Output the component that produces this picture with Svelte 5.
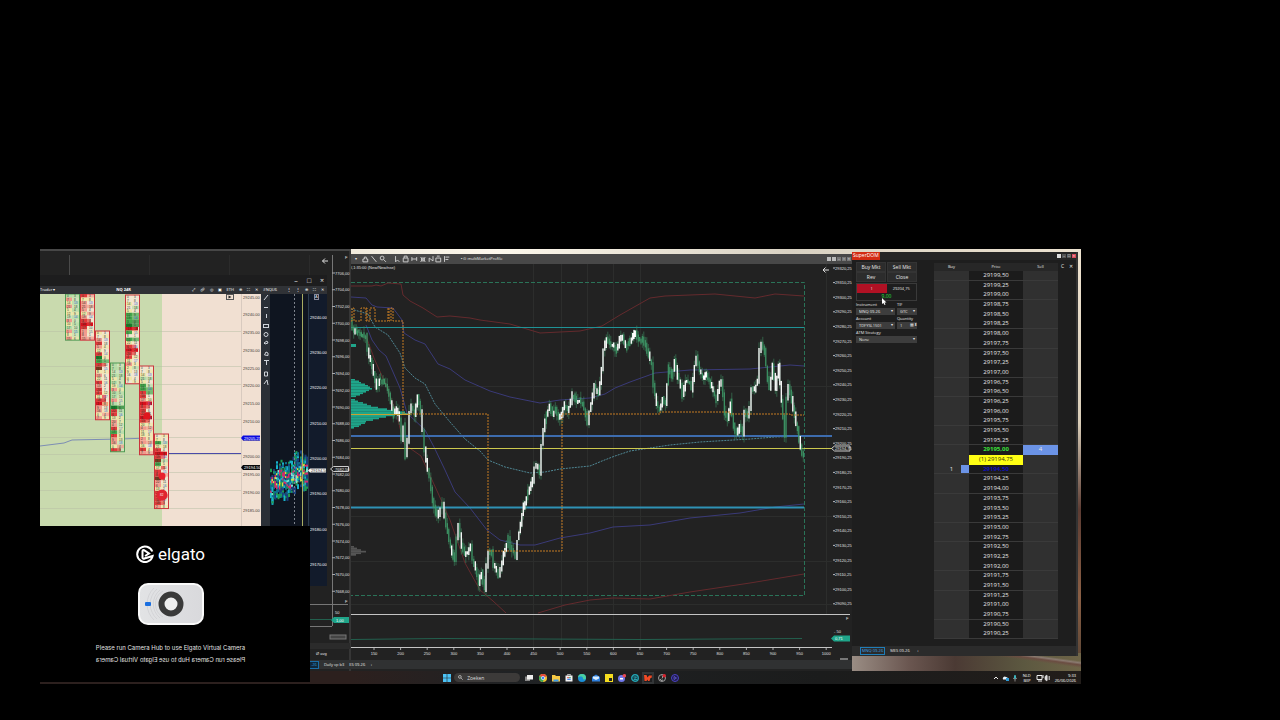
<script lang="ts">
    type Point = [number, number];

    // Small seeded generator so the candles and the heatmap look the same on every load
    function seeded(seed: number) {
        let s = seed;
        return () => {
            s = (s * 16807) % 2147483647;
            return s / 2147483647;
        };
    }

    function price(n: number, sep = ',') {
        return n.toFixed(2).replace('.', sep);
    }

    function steps(count: number, y: number, gap: number, value: number, dec: number, sep = ',') {
        return Array.from({ length: count }, (_, i) => ({ y: y + i * gap, text: price(value - i * dec, sep) }));
    }

    const track: Point[] = [
        [351, 318], [353, 330], [357, 331], [362, 334], [366, 336], [368, 350], [371, 360], [374, 374], [377, 387],
        [380, 379], [385, 383], [388, 390], [391, 402], [394, 415], [397, 408], [400, 418], [402, 440], [404, 426],
        [406, 456], [408, 440], [410, 412], [412, 406], [415, 415], [418, 395], [421, 412], [423, 430], [425, 450],
        [428, 468], [430, 478], [433, 500], [436, 512], [439, 515], [441, 508], [443, 505], [445, 515], [448, 532],
        [451, 548], [455, 560], [457, 540], [459, 526], [462, 545], [465, 555], [468, 553], [471, 545], [473, 560],
        [476, 570], [479, 582], [482, 573], [485, 590], [487, 565], [489, 551], [492, 552], [494, 565], [497, 572],
        [499, 577], [501, 570], [504, 553], [507, 545], [509, 538], [511, 548], [514, 553], [516, 556], [518, 540],
        [521, 525], [524, 506], [527, 498], [530, 488], [533, 480], [535, 468], [537, 465], [540, 472], [542, 445],
        [544, 430], [547, 415], [550, 405], [553, 415], [556, 410], [559, 416], [562, 415], [565, 405], [568, 410],
        [571, 402], [573, 395], [577, 402], [580, 400], [583, 405], [586, 414], [588, 425], [590, 412], [593, 395],
        [595, 385], [599, 395], [602, 370], [604, 350], [607, 338], [610, 344], [613, 345], [617, 350], [620, 340],
        [623, 335], [626, 347], [629, 343], [632, 338], [636, 332], [639, 340], [643, 340], [646, 345], [649, 355],
        [652, 365], [654, 385], [657, 405], [660, 409], [663, 398], [666, 403], [669, 368], [672, 377], [675, 362],
        [678, 376], [681, 385], [683, 395], [686, 382], [690, 383], [692, 390], [695, 366], [697, 356], [700, 370],
        [703, 378], [707, 375], [711, 385], [715, 395], [717, 400], [720, 384], [722, 380], [725, 412], [728, 420],
        [731, 402], [734, 425], [737, 435], [740, 425], [743, 433], [745, 410], [748, 417], [750, 410], [752, 388],
        [755, 390], [758, 380], [760, 352], [762, 343], [765, 352], [768, 380], [770, 390], [773, 366], [776, 388],
        [779, 364], [782, 400], [785, 434], [787, 400], [789, 385], [792, 400], [795, 415], [798, 430], [801, 448],
        [804, 457]
    ];

    function candlePaths(points: Point[]) {
        const rnd = seeded(77);
        let up = '';
        let down = '';
        let wicks = '';
        for (let i = 1; i < points.length; i++) {
            const [x0, y0] = points[i - 1];
            const [x1, y1] = points[i];
            const n = Math.max(1, Math.round((x1 - x0) / 1.4));
            for (let k = 0; k < n; k++) {
                const x = x0 + ((x1 - x0) * (k + 0.5)) / n;
                const a = y0 + ((y1 - y0) * k) / n;
                const b = y0 + ((y1 - y0) * (k + 1)) / n;
                const top = Math.min(a, b) - rnd() * 4;
                const low = Math.max(a, b) + rnd() * 4;
                const rising = b < a ? rnd() > 0.1 : rnd() > 0.75;
                const bar = `M${x.toFixed(1)} ${top.toFixed(1)}V${low.toFixed(1)}`;
                if (rising) up += bar;
                else down += bar;
                wicks += `M${x.toFixed(1)} ${(top - rnd() * 6).toFixed(1)}V${(low + rnd() * 6).toFixed(1)}`;
            }
        }
        return { up, down, wicks };
    }

    const candles = candlePaths(track);

    const bands = [
        { kind: 'outer', d: 'M351 286L372 286 376 285 381 286 388 283 401 284 403 295 410 301 423 308 437 317 450 316 470 318 480 320 510 324 540 333 580 331 602 326 620 315 650 298 665 296 690 295 715 294 735 296 755 298 775 294 804 296' },
        { kind: 'inner', d: 'M351 297L366 298 372 305 377 307 393 308 402 320 404 333 415 340 425 344 438 364 450 369 465 380 490 391 510 397 540 403 560 400 590 398 605 394 615 388 630 382 655 373 690 370 750 369 790 365 804 366' },
        { kind: 'inner', d: 'M366 325L372 340 379 350 386 356 400 388 407 413 425 430 434 447 445 470 455 492 470 508 487 530 500 540 520 545 535 545 560 538 590 533 613 527 650 525 690 518 740 513 775 507 804 504' },
        { kind: 'outer', d: 'M366 336L374 358 386 385 396 412 404 444 421 456 438 493 450 520 465 563 480 590 493 601 506 613M538 613L565 605 590 600 613 598 650 599 690 592 750 583 804 574' }
    ];

    const vwap = 'M351 309L368 314 375 327 388 335 400 353 405 368 415 378 425 384 435 404 450 422 465 439 480 451 488 460 505 467 530 473 545 472 560 469 590 466 602 461 615 456 630 451 670 445 700 442 750 439 775 437 804 436';
    const levels = 'M351 321H352V308H354V321H361V308H367V321M366 308V321H370V308H375V321H388V308H389V321H391V308H393V321H403V414H488V551H562V414H660V412H730V414H790V415H804';

    const upperProfile = [4, 8, 10, 14, 17, 19, 21, 18, 15, 12, 9, 5];
    const lowerProfile = [4, 7, 12, 16, 20, 27, 36, 44, 54, 60, 44, 35, 28, 22, 15, 14, 10, 8, 3];
    const greyProfile = [3, 6, 10, 15, 10, 5];

    const rightAxis = steps(24, 268, 14.6, 29320.25, 10);
    const backAxis = steps(20, 273, 16.75, 7706, 2);
    const bookAxis = steps(8, 317, 35.35, 29240, 10, '.');
    const footAxis = steps(13, 297, 17.75, 29245, 5, '.');
    const times = Array.from({ length: 18 }, (_, i) => ({ x: 374 + i * 26.6, text: 150 + i * 50 }));

    // One letter per price row: bid side, then ask side
    const footprints = [
        { x: 65, y: 294, up: true, bid: 'lpypyy.pylpyp', ask: 'l.l.lyl.l.l.y' },
        { x: 80, y: 294, up: false, bid: 'rypppyprRrppp', ask: 'py.p.p.rr.y.p' },
        { x: 95, y: 331, up: false, bid: 'y.prpyrGgrdypyrprryrRppyp', ask: '.y..y.yygr.y..y..yrRy.ypy' },
        { x: 110, y: 363, up: true, bid: 'll.lylypllplGrrypprgrppyr', ask: '.l.l..lyl.y.Gl.yy.ylyy.pr' },
        { x: 125, y: 295, up: false, bid: '..y.ygggGRg.gyrRrrypyy.y.', ask: '...l.ggGGry.g.rrry.yl...y' },
        { x: 139, y: 366, up: false, bid: '..ylyggrrpRrrrRrypyyppyrp', ask: '.y.l.lgg.yrr.RRrypyyyp.yp' },
        { x: 154, y: 434, up: false, bid: '.ygyrRrdgyrrdppyrrrrp', ask: 'y.ly.Rrlyr.pr.y..prry' }
    ];
    const shades: Record<string, string> = {
        r: '#e23a3a', R: '#d80f1b', d: '#7c3a1e', p: '#f29a8c', y: '#f1e6a8', l: '#b6dca6', g: '#45a84c', G: '#17802a'
    };

    function bookCells() {
        const rnd = seeded(4211);
        const palette = ['#0f6d8c', '#17b3c9', '#1c3f7a', '#1f9a54', '#7fe3d0', '#d6e23c', '#d42b6a', '#d42b6a', '#0b8a6a'];
        const cells: { x: number; y: number; h: number; c: string }[] = [];
        for (let x = 270; x < 307; x += 1.5) {
            const mid = 484 - (x - 270) * 0.4 + Math.sin(x / 3) * 3;
            for (let y = mid - 20; y < mid + 18; y += 2) {
                const far = Math.abs(y - mid) / 20;
                if (rnd() < far * 0.8) continue;
                const pick = far < 0.5 ? Math.floor(rnd() * 9) : Math.floor(rnd() * 4);
                cells.push({ x, y, h: 2 + rnd() * 4, c: palette[pick] });
            }
        }
        return cells;
    }
    const book = bookCells();

    const ladder = Array.from({ length: 38 }, (_, i) => 29199.5 - i * 0.25);

    let quantity = 1;
    let activeTab = 'MNQ 09-26';
    const domTabs = ['MNQ 09-26', 'MES 09-26'];
</script>

<main class="page">
    <div class="desktop">
        <section class="window back" aria-label="Index chart">
            <div class="back-strip"><i></i><i></i><i></i><i></i></div>
            <svg class="back-axis" viewBox="310 251 41 420">
                <rect x="310" y="251" width="41" height="420" fill="#222" />
                <rect x="349" y="251" width="2" height="420" fill="#363636" />
                <path d="M328 261H322.500M325 258.500L322.500 261l2.500 2.500" stroke="#ddd" fill="none" />
                <path d="M332.500 255V604M310 604.500H348M332.500 604V626M310 626.500H332" stroke="#777" fill="none" />
                <path d="M310 619.500H331" stroke="#23604e" />
                <text x="345" y="259">F</text>
                {#each backAxis as tick}
                    <path d="M332 {tick.y}h3" stroke="#aaa" stroke-width="1" />
                    <text x="335" y={tick.y + 1.5}>{tick.text}</text>
                {/each}
                <path d="M330.500 469l3-2.500H348.500v5H333.500z" fill="#222" stroke="#ccc" />
                <text x="335" y="471">7682,50</text>
                <text x="345" y="603">F</text>
                <text x="335" y="614">50</text>
                <path d="M331 620l3-3H349v6H334z" fill="#1fa58a" />
                <text x="336" y="622" class="bright">1,00</text>
                <rect x="330" y="635" width="16" height="4" fill="#444" stroke="#777" />
                <rect x="310" y="643" width="40" height="6" fill="#2b2b2b" />
                <text x="316" y="655">Ø avg</text>
            </svg>
        </section>

        <section class="window flow" aria-label="Order flow">
            <header class="flow-title">
                <button aria-label="Minimise">–</button>
                <button aria-label="Maximise">□</button>
                <button aria-label="Close">×</button>
            </header>
            <div class="panes">
                <div class="pane foot">
                    <div class="pane-bar">
                        <span>Trader ▾</span>
                        <b>NQ 24R</b>
                        <span class="bar-tools"><i>⤢</i><i>🔗︎</i><i>◎</i><i>▣</i><i>ETH</i><i>⊕</i><i>⛶</i><i>✕</i></span>
                    </div>
                    <svg viewBox="40 294 221 250">
                        <rect x="40" y="294" width="122" height="250" fill="#c9daae" />
                        <rect x="162" y="294" width="99" height="250" fill="#f1e0d2" />
                        {#each [331.5, 366.5, 384.5, 419.5, 437.500, 454.5, 472.500, 490.5, 508.500] as y}
                            <path d="M40 {y}H241" stroke="#b9bfa6" opacity="0.5" />
                        {/each}
                        <path d="M241.500 294V544" stroke="#d8cabf" />
                        <path d="M40 446L56 444 64 443 72 440 120 439 150 438 162 437" fill="none" stroke="#7c8db4" />
                        <path d="M168 453.500H241" stroke="#4a4aa8" />
                        {#each footprints as col}
                            <rect x={col.x} y={col.y} width="14" height={col.bid.length * 3.55} fill={col.up ? '#cfe3b8' : '#f1e6cf'} />
                            {#each col.bid as code, i}
                                {#if code !== '.'}
                                    <rect x={col.x} y={col.y + i * 3.55} width={code === 'R' ? 13 : 7} height="3.600" fill={shades[code]} />
                                {/if}
                                {#if col.ask[i] !== '.'}
                                    <rect x={col.x + 7} y={col.y + i * 3.55} width={col.ask[i] === 'r' || col.ask[i] === 'R' ? 4 : 7} height="3.600" fill={shades[col.ask[i]]} opacity="0.7" />
                                {/if}
                                <text class="cell" x={col.x + 2} y={col.y + i * 3.55 + 3}>{(i * 7) % 23}</text>
                                <text class="cell" class:blue={i % 4 === 2} x={col.x + 9} y={col.y + i * 3.55 + 3}>{(i * 5 + 3) % 19}</text>
                            {/each}
                            <rect x={col.x + 0.5} y={col.y} width="14" height={col.bid.length * 3.55} fill="none" stroke={col.up ? '#4f9a55' : '#c9353c'} />
                        {/each}
                        <circle cx="147" cy="416" r="3.500" fill="#e0161e" />
                        <circle cx="162" cy="476" r="3.500" fill="#e8202c" />
                        <circle cx="162" cy="495" r="5.500" fill="#e02430" />
                        <text class="cell white" x="160" y="496">82</text>
                        <rect x="226.500" y="294.500" width="7" height="5" fill="none" stroke="#555" />
                        <path d="M228.500 295.500v3l3-1.500z" fill="#222" />
                        {#each footAxis as tick}
                            <text x="243" y={tick.y + 1.5} class="ink">{tick.text}</text>
                        {/each}
                        <path d="M241 438l2-2.500H260v5H243z" fill="#0a0ae0" />
                        <text x="244" y="439.500" class="bright">29205.25</text>
                        <path d="M241 467.500l2-2.500H260v5H243z" fill="#080808" />
                        <text x="244" y="469" class="bright">29194.50</text>
                    </svg>
                </div>
                <div class="pane dom-heat">
                    <div class="pane-bar">
                        <span>&nbsp; #NQU6</span>
                        <span class="bar-tools"><i>⋮</i><i>⋮</i><i>⊕</i><i>⛶</i><i>✕</i></span>
                    </div>
                    <svg viewBox="261 294 66 292">
                        <rect x="261" y="294" width="66" height="292" fill="#0f1520" />
                        <rect x="261" y="294" width="9" height="292" fill="#2a2f36" />
                        <rect x="308" y="294" width="19" height="292" fill="#121b2b" />
                        <g fill="none" stroke="#d0d4da">
                            <path d="M264 300l4-5M264 307.500h4M266.500 314v4M264 343l3-2 1 2-3 1zM264.500 355l1.500-3 2 1v2.500zM264 360.500h5M266.500 360v5M264.500 372h3v4h-3zM264 384l3-4 1 5" />
                            <rect x="263.500" y="324.500" width="5" height="3" />
                            <circle cx="266" cy="334.500" r="2" />
                        </g>
                        {#each book as c}
                            <rect x={c.x} y={c.y} width="2" height={c.h} fill={c.c} />
                        {/each}
                        <path d="M294.500 294V586" stroke="#7d838c" stroke-dasharray="2 2" />
                        <path d="M302.500 294V586" stroke="#a9ad62" />
                        <path d="M308.500 294V586" stroke="#2c3c4d" />
                        <rect x="314.500" y="294.500" width="4" height="5" fill="none" stroke="#889" />
                        <text x="315" y="298">A</text>
                        {#each bookAxis as tick}
                            <text x="310" y={tick.y + 1.5} class="bright">{tick.text}</text>
                        {/each}
                        <path d="M308 470.500l2-2H326v4H310z" fill="#f4f4f4" />
                        <text x="311" y="472" class="ink">29194.50</text>
                    </svg>
                </div>
            </div>
        </section>

        <section class="window main-chart" aria-label="Price chart">
            <header class="chart-bar">
                <i>▾</i>
                <svg viewBox="0 0 100 8" class="chart-tools">
                    <path d="M2 7V4h1.500V2h2v2H7v3zM11 1l5 6M20 3a2 2 0 1 0 4 0a2 2 0 1 0-4 0M23.500 4.500L26 7M36 1v6l2-2 2 2M44 3h5v4h-5zM45 3V1h3v2M53 2v4M58 2v4M53 4h5M62 2l5 5M67 2l-5 5M63 3h3v3h-3zM71 7V3l4 3V1M78 3h5v4h-5zM79 1h3M87 1v6M88 2h4M88 4.500h3" />
                </svg>
                <span>▪ ⊙ multiMarketProfile</span>
                <span class="chart-buttons"><button aria-label="Link"></button><button aria-label="Pin"></button><button aria-label="Minimise">–</button><button aria-label="Restore">▫</button><button aria-label="Close">×</button></span>
            </header>
            <svg class="plot" viewBox="351 264 501 396">
                <rect x="351" y="264" width="501" height="396" fill="#222" />
                <path d="M533.500 264V648M561.500 264V648M587.500 264V648M613.500 264V648M640.500 264V648M826.500 264V614M351 386.500H832M351 516.500H832M351 561.500H832M351 604.500H832" stroke="#2c2d2c" fill="none" />
                <text x="351" y="269">/,1:35:00 (New/New/nse)</text>
                <path d="M829 270H823M825.500 267.500L823 270l2.500 2.500" stroke="#ddd" fill="none" />
                {#each upperProfile as w, i}
                    <rect x="351" y={379 + i * 1.5} width={w} height="1.600" fill="#1fa58a" />
                {/each}
                {#each lowerProfile as w, i}
                    <rect x="351" y={399 + i * 1.55} width={w} height="1.700" fill="#1fa58a" />
                {/each}
                {#each greyProfile as w, i}
                    <rect x="351" y={546 + i * 1.6} width={w} height="1.700" fill="#555" />
                {/each}
                <rect x="351" y="344" width="5" height="3" fill="#1fa58a" />
                <path d="M351 282.500H804.500V595.500H351" fill="none" stroke="#2a7358" stroke-dasharray="4 2" />
                {#each bands as band}
                    <path class="band {band.kind}" d={band.d} />
                {/each}
                <path d={vwap} fill="none" stroke="#4f8794" stroke-dasharray="2 1" />
                <path d="M351 327.500H804" stroke="#1f9296" />
                <path d="M351 507.500H804" stroke="#2f92b5" stroke-width="2" />
                <path d="M351 436H832" stroke="#3d6cae" stroke-width="2" />
                <path d="M351 448.500H832" stroke="#cdc94e" stroke-width="1" />
                <path d={candles.wicks} fill="none" stroke="#3d8a60" stroke-width="1" opacity="0.6" />
                <path d={candles.down} fill="none" stroke="#3f9f6b" stroke-width="1" />
                <path d={candles.up} fill="none" stroke="#fff" stroke-width="1.300" />
                <path d={levels} fill="none" stroke="#c47a22" stroke-dasharray="2 1" />
                <path d="M351 414.500H410" stroke="#c9a030" />
                {#each rightAxis as tick}
                    <path d="M833 {tick.y}h2" stroke="#bbb" />
                    <text x="835" y={tick.y + 1.5}>{tick.text}</text>
                {/each}
                <path d="M831.500 448.500l3-2.500H850v5H834.500z" fill="#222" stroke="#ccc" />
                <text x="835" y="450">29194,75</text>
                <path d="M351 614.500H850M351 647.500H832" stroke="#c4c4c4" />
                <path d="M351 639.500L440 638.500 640 639.500 802 638.500" fill="none" stroke="#23604e" />
                <text x="846" y="620">F</text>
                <text x="834" y="633">- 50</text>
                <path d="M831 638.500l3-3H850v6H834z" fill="#1fa58a" />
                <text x="835" y="640" class="bright">0,71</text>
                {#each times as t}
                    <path d="M{t.x} 648v2" stroke="#aaa" />
                    <text x={t.x} y="655" text-anchor="middle">{t.text}</text>
                {/each}
                <rect x="840" y="658" width="8" height="2" fill="#777" />
            </svg>
        </section>

        <nav class="chart-tabs" aria-label="Workspaces">
            <a href="#nq" class="active">-26</a>
            <a href="#daily">Daily vp b3</a>
            <a href="#es">ES 09-26</a>
            <button aria-label="Add workspace">+</button>
        </nav>

        <section class="window dom" aria-label="SuperDOM">
            <header class="dom-title">
                <b>SuperDOM</b>
                <span><button aria-label="Link"></button><button aria-label="Minimise">–</button><button aria-label="Maximise">□</button><button class="shut" aria-label="Close">×</button></span>
            </header>
            <div class="dom-body">
                <form class="order">
                    <div class="pair">
                        <button type="button">Buy Mkt</button>
                        <button type="button">Sell Mkt</button>
                        <button type="button">Rev</button>
                        <button type="button">Close</button>
                    </div>
                    <div class="position">
                        <span class="size">1</span>
                        <span>29204,75</span>
                        <output>9,00</output>
                    </div>
                    <div class="fields">
                        <label for="instrument">Instrument</label>
                        <label for="tif">TIF</label>
                        <div class="pick"><select id="instrument"><option>MNQ 09-26</option></select></div>
                        <div class="pick"><select id="tif"><option>GTC</option></select></div>
                        <label for="account">Account</label>
                        <label for="quantity">Quantity</label>
                        <div class="pick"><select id="account"><option>TDFYSL1501</option></select></div>
                        <div class="amount"><input id="quantity" type="text" bind:value={quantity} /><i>▦</i><i>⬍</i></div>
                    </div>
                    <label for="atm">ATM Strategy</label>
                    <div class="pick"><select id="atm"><option>None</option></select></div>
                </form>
                <table>
                    <thead>
                        <tr><th>Buy</th><th>Price</th><th>Sell</th></tr>
                    </thead>
                    <tbody>
                        {#each ladder as p, i}
                            <tr class:last={p === 29195} class:entry={p === 29194.75} class:bid={p === 29194.5} class:ruled={i % 5 === 0 || i % 5 === 2}>
                                <td>{p === 29194.5 ? 1 : ''}</td>
                                <td>{p === 29194.75 ? '(1) ' : ''}{price(p)}</td>
                                <td>{p === 29195 ? 4 : ''}</td>
                            </tr>
                        {/each}
                    </tbody>
                </table>
                <div class="corner"><button>C</button><button aria-label="Close ladder">✕</button></div>
            </div>
            <nav class="dom-tabs">
                {#each domTabs as tab}
                    <button class:active={tab === activeTab} on:click={() => (activeTab = tab)}>{tab}</button>
                {/each}
                <button aria-label="Add tab">+</button>
            </nav>
        </section>

        <svg class="cursor" viewBox="0 0 5 7"><path d="M0 0v6l1.500-1 1 2 1-.5-1-2H4.500z" fill="#fff" /></svg>

        <footer class="taskbar">
            <div class="apps">
                <button aria-label="Start"><svg viewBox="0 0 8 8"><path d="M0 0h3.700v3.700H0zM4.300 0H8v3.700H4.300zM0 4.300h3.700V8H0zM4.300 4.300H8V8H4.300z" fill="#4cc2f5" /></svg></button>
                <label class="search"><svg viewBox="0 0 8 8"><circle cx="3" cy="3" r="2.200" fill="none" stroke="#eee" /><path d="M5 5l2.500 2.500" stroke="#eee" /></svg><input type="text" placeholder="Zoeken" aria-label="Zoeken" /></label>
                <button aria-label="Task view"><svg viewBox="0 0 8 8"><path d="M0 2.500h5V7H0z" fill="#888" /><path d="M2 1h6v4.500H2z" fill="#eee" /></svg></button>
                <button aria-label="Chrome"><svg viewBox="0 0 8 8"><circle cx="4" cy="4" r="4" fill="#f2c230" /><path d="M.5 2A4 4 0 0 1 7.600 2.200L4 4z" fill="#e5463a" /><path d="M.5 2A4 4 0 0 0 4 8L5 4z" fill="#3aa757" /><circle cx="4" cy="4" r="1.700" fill="#4285f4" stroke="#fff" stroke-width="0.600" /></svg></button>
                <button aria-label="Explorer"><svg viewBox="0 0 8 8"><path d="M0 1h3l1 1h4v5.500H0z" fill="#f6c944" /><path d="M1.500 5.500h5v2h-5z" fill="#3d9be8" /></svg></button>
                <button aria-label="Store"><svg viewBox="0 0 8 8"><path d="M.5 1.500h7v6h-7z" fill="#f2f2f2" /><path d="M2.500 1.500V.5h3v1" fill="none" stroke="#eee" stroke-width="0.700" /><path d="M2.300 3h1.500v1.300H2.300z" fill="#e5463a" /><path d="M4.200 3h1.500v1.300H4.200z" fill="#3aa757" /><path d="M2.300 4.700h3.400V6H2.300z" fill="#4285f4" /></svg></button>
                <button aria-label="Edge"><svg viewBox="0 0 8 8"><circle cx="4" cy="4" r="4" fill="#1b8fd6" /><path d="M0 4A4 4 0 0 1 8 4C8 6 5 6 5 4.500 5 2 1 2 0 4z" fill="#4bd0a0" /></svg></button>
                <button aria-label="Mail"><svg viewBox="0 0 8 8"><path d="M0 3l4-2.500L8 3v4.500H0z" fill="#2f80de" /><path d="M1 2.500h6v2L4 6 1 4.500z" fill="#dbeeff" /></svg></button>
                <button aria-label="Notes"><svg viewBox="0 0 8 8"><path d="M0 0h8v8H0z" fill="#f5dc1f" /><path d="M4 4h3v3H4z" fill="#222" /></svg></button>
                <button aria-label="Chat"><svg viewBox="0 0 8 8"><circle cx="3.500" cy="4.500" r="3.500" fill="#7078ec" /><path d="M2 4h3v1.500H2z" fill="#fff" /><circle cx="6.300" cy="1.800" r="1.800" fill="#e84a55" /></svg></button>
                <button aria-label="Browser"><svg viewBox="0 0 8 8"><circle cx="4" cy="4" r="3.300" fill="#0f3c48" stroke="#25a7b5" stroke-width="1.300" /><path d="M2.500 3h3L3 5.500h3" fill="none" stroke="#39c4ce" stroke-width="0.700" /></svg></button>
                <button class="current" aria-label="Trading"><svg viewBox="0 0 8 8"><path d="M0 1h2.500l1 2.500L5 1.500h3L7.500 4H6.500L5.500 7H4L3.500 5.500 2.500 7H.5z" fill="#f04a26" /></svg></button>
                <button aria-label="Recorder"><svg viewBox="0 0 8 8"><circle cx="4" cy="4" r="3.500" fill="#222" stroke="#bbb" stroke-width="0.800" /><path d="M4 1.500a2 2 0 0 1 0 3M2 5a2 2 0 0 0 3 1" fill="none" stroke="#ddd" stroke-width="0.700" /><circle cx="6.300" cy="1.800" r="1.700" fill="#d8222d" /></svg></button>
                <button aria-label="Stream deck"><svg viewBox="0 0 8 8"><circle cx="4" cy="4" r="3.500" fill="#1d1a4a" stroke="#4d43c4" /><path d="M3 2.500v3L5.500 4z" fill="none" stroke="#6f66e8" stroke-width="0.700" /></svg></button>
            </div>
            <div class="tray">
                <svg class="chevron" viewBox="0 0 6 8"><path d="M1 5l2-2 2 2" fill="none" stroke="#eee" /></svg>
                <svg viewBox="0 0 18 8"><path d="M1 5.500a2 2 0 0 1 3-2.500 2 2 0 0 1 2 2.500z" fill="#e8f4fb" /><path d="M4 4h3v3H4z" fill="#2e9bd6" /><rect x="12" y="1" width="2" height="4" rx="1" fill="#3cb3bd" /><path d="M11 4q2 3 4 0M13 6v1.500" stroke="#ccc" fill="none" stroke-width="0.600" /></svg>
                <span class="stack">NLD<br />BEP</span>
                <svg viewBox="0 0 18 8"><path d="M3 1.500h5v4H3zM4 7h4M9 1v3" stroke="#eee" fill="none" /><path d="M11 2.500l2-1.500v6l-2-1.500zM14 2v4M15.500 2v4" fill="#ddd" stroke="#ddd" stroke-width="0.700" /></svg>
                <span class="stack clock">9:33<br />26/06/2026</span>
            </div>
        </footer>

        <section class="window camera" aria-label="Virtual camera">
            <div class="brand">
                <svg viewBox="0 0 18 18">
                    <path d="M16.300 6.500A7.800 7.800 0 1 0 16.600 11L8.500 13.500A1.200 1.200 0 0 1 6.500 12.500V6a1 1 0 0 1 1.500-.8L13 8.500 9 11" />
                </svg>
                <span>elgato</span>
            </div>
            <svg class="device" viewBox="0 0 66 42">
                <defs>
                    <linearGradient id="shell" x1="0" x2="1"><stop offset="0" stop-color="#e2e3e5" /><stop offset="1" stop-color="#d9d9dc" /></linearGradient>
                </defs>
                <rect x="1" y="1" width="64" height="40" rx="9" fill="url(#shell)" stroke="#fafafa" stroke-width="2" />
                <g fill="none" stroke="#c4c5c9" stroke-width="0.500">
                    <path d="M22 7a18 18 0 0 0 0 28M19 6a20 20 0 0 0 0 30M16 5a22 22 0 0 0 0 32M25 8a15 15 0 0 0 0 26" />
                </g>
                <circle cx="33" cy="21" r="9.500" fill="#eee" stroke="#3a3a3a" stroke-width="6" />
                <rect x="7" y="19" width="6" height="4" rx="1" fill="#1a6fe0" />
            </svg>
            <p>Please run Camera Hub to use Elgato Virtual Camera</p>
            <p class="mirror">Please run Camera Hub to use Elgato Virtual Camera</p>
        </section>
    </div>
</main>

<style>
    :global(body) {
        margin: 0;
        background: #000;
    }

    .page {
        min-height: 100vh;
        box-sizing: border-box;
        padding: 249px 199px 0 40px;
        background: #000;
        color: #e6e6e6;
        font-family: 'Open Sans', 'Noto Sans', sans-serif;
        font-size: 4px;
        line-height: 6px;
    }

    .desktop {
        position: relative;
        height: 435px;
        overflow: hidden;
        background:
            linear-gradient(8deg, transparent 70%, #6b4d42 76%, #8a7a70 80%, transparent 84%) right bottom 13px / 229px 18px no-repeat,
            linear-gradient(90deg, #9a8d84 0%, #6a5650 25%, #4b3a34 45%, #5c5840 75%, #6f6548 100%) right bottom 13px / 229px 18px no-repeat,
            linear-gradient(90deg, #f0eadc, #fdf8ec 20%, #d9d2c3 60%, #ece2d0) right top / 730px 5px no-repeat,
            linear-gradient(#efe3d0, #d9cdb8 40%, #5c3c33 60%, #8a5f45 80%, #4c3d30) right top / 3px 100% no-repeat,
            #222;
    }

    button,
    input,
    select {
        font: inherit;
        color: inherit;
        background: none;
        border: 0;
        margin: 0;
        padding: 0;
        border-radius: 0;
        min-width: 0;
    }

    i {
        font-style: normal;
    }

    svg {
        display: block;
        width: 100%;
    }

    svg text {
        font-family: 'Liberation Sans Narrow', 'Liberation Sans', sans-serif;
        font-size: 4px;
        fill: #e0e0e0;
    }

    svg .ink {
        fill: #3c3833;
    }

    svg .bright {
        fill: #fff;
    }

    svg .cell {
        font-size: 3px;
        fill: #2b3a2b;
    }

    svg .blue {
        fill: #2a52d0;
    }

    svg .white {
        fill: #fff;
    }

    .window {
        position: absolute;
        overflow: hidden;
        background: #222;
    }

    .back {
        left: 0;
        top: 0;
        width: 311px;
        height: 422px;
        border-top: 2px solid #474747;
        box-sizing: border-box;
    }

    .back-strip {
        display: flex;
        gap: 79px;
        height: 22px;
        padding: 4px 0 0 29px;
    }

    .back-strip i {
        width: 1px;
        background: #2b2b2b;
    }

    .back-strip i:first-child {
        background: #4a4a4a;
    }

    .back-axis {
        position: absolute;
        right: 0;
        top: 0;
        width: 41px;
    }

    .flow {
        left: 0;
        top: 26px;
        width: 287px;
        background: #1d1d1e;
    }

    .flow-title {
        display: flex;
        justify-content: flex-end;
        gap: 7px;
        height: 11px;
        padding-right: 2px;
    }

    .flow-title button {
        width: 6px;
        font-size: 7px;
        line-height: 11px;
    }

    .panes {
        display: grid;
        grid-template-columns: 221fr 66fr;
        align-items: start;
    }

    .pane-bar {
        display: flex;
        align-items: center;
        justify-content: space-between;
        height: 8px;
        background: #303236;
        color: #fff;
        white-space: nowrap;
    }

    .bar-tools {
        display: flex;
        gap: 5px;
        padding-right: 3px;
    }

    .main-chart {
        left: 311px;
        right: 229px;
        top: 5px;
        bottom: 13px;
    }

    .chart-bar {
        display: flex;
        align-items: center;
        gap: 4px;
        height: 10px;
        padding-left: 4px;
        background: #484848;
    }

    .chart-tools {
        width: 96px;
        height: 8px;
        fill: none;
        stroke: #ccc;
    }

    .chart-buttons {
        display: flex;
        gap: 1px;
        margin-left: auto;
        padding-right: 1px;
    }

    .chart-buttons button {
        width: 4px;
        height: 4px;
        line-height: 4px;
        background: #777;
    }

    .chart-buttons button:nth-child(-n + 2) {
        background: #bbb;
    }

    .band {
        fill: none;
        stroke-width: 1;
    }

    .outer {
        stroke: #642a2d;
    }

    .inner {
        stroke: #3a3a78;
    }

    .chart-tabs {
        position: absolute;
        left: 262px;
        right: 229px;
        bottom: 15px;
        display: flex;
        align-items: center;
        gap: 5px;
        height: 9px;
        padding-left: 4px;
        background: #303132;
    }

    .chart-tabs a {
        color: #e6e6e6;
        text-decoration: none;
    }

    .chart-tabs .active {
        padding: 0 1px 0 4px;
        color: #2b9bdc;
        background: #10283a;
        border: 1px solid #1b6fa8;
    }

    .dom {
        right: 3px;
        top: 3px;
        width: 226px;
        height: 404px;
        background: #1e1e1e;
        border-right: 2px solid #333;
        box-sizing: border-box;
        display: flex;
        flex-direction: column;
    }

    .dom-title {
        display: flex;
        justify-content: space-between;
        height: 8px;
        background: #262626;
    }

    .dom-title b {
        padding: 0 1px;
        background: #d32b12;
        color: #fff;
        font-size: 5px;
        font-weight: 400;
        line-height: 7px;
    }

    .dom-title span {
        display: flex;
        align-items: center;
        gap: 1px;
    }

    .dom-title button {
        width: 4px;
        height: 4px;
        line-height: 4px;
        background: #555;
    }

    .dom-title button:first-child {
        background: #ddd;
    }

    .dom-title .shut {
        background: #d84a5a;
        color: #fff;
    }

    .dom-body {
        flex: 1;
        display: grid;
        grid-template-columns: 61px 124px 1fr;
        column-gap: 17px;
        padding: 2px 0 0 4px;
    }

    .pair,
    .position {
        display: grid;
        grid-template-columns: 1fr 1fr;
        column-gap: 1px;
        text-align: center;
        font-size: 5px;
    }

    .pair button {
        height: 10px;
        background: #2c2c2c;
        border: 1px solid #343434;
    }

    .position {
        column-gap: 0;
        height: 16px;
        margin-top: 1px;
        border: 1px solid #3a3a3a;
        font-size: 4px;
        line-height: 9px;
    }

    .position .size {
        background: #b01124;
    }

    .position output {
        grid-column: 1 / 3;
        color: #25e03a;
        font-size: 5px;
        line-height: 7px;
    }

    .fields {
        display: grid;
        grid-template-columns: 39fr 20fr;
        column-gap: 2px;
    }

    .order label {
        display: block;
        height: 7px;
        line-height: 7px;
        white-space: nowrap;
    }

    .pick,
    .amount {
        position: relative;
        display: flex;
        height: 7px;
        background: #3d3d3d;
    }

    .pick::after {
        content: '▾';
        position: absolute;
        right: 2px;
        line-height: 6px;
    }

    .pick select {
        appearance: none;
        width: 100%;
        padding-left: 3px;
        line-height: 6px;
    }

    .amount input {
        flex: 1;
        width: 8px;
        padding-left: 3px;
    }

    table {
        display: block;
        padding-top: 1px;
        border-collapse: collapse;
        text-align: center;
    }

    thead,
    tbody {
        display: block;
    }

    tr {
        display: grid;
        grid-template-columns: 35px 54px 35px;
    }

    th {
        height: 8px;
        padding: 0;
        background: #272727;
        font-weight: 400;
        line-height: 8px;
    }

    tbody {
        display: flex;
        flex-direction: column;
        height: 368px;
        background: #303030;
    }

    tbody tr {
        flex: 1;
        font-size: 6px;
        line-height: 9px;
    }

    td {
        padding: 0;
    }

    td:nth-child(2) {
        background: #1b1b1b;
    }

    .ruled td {
        box-shadow: inset 0 -1px #3a3a3a;
    }

    .last td:nth-child(2) {
        color: #3be03b;
        font-weight: 700;
    }

    .last td:last-child {
        background: #6b93e6;
    }

    .entry td:nth-child(2) {
        background: #ffff14;
        color: #33330a;
    }

    .bid td:nth-child(2) {
        color: #1212b8;
        font-weight: 700;
    }

    .bid td:first-child {
        background: linear-gradient(90deg, transparent 27px, #6b93e6 27px);
    }

    .corner {
        display: flex;
        gap: 5px;
        height: 8px;
        margin-left: -14px;
    }

    .corner button {
        font-size: 5px;
        line-height: 8px;
    }

    .dom-tabs {
        display: flex;
        align-items: center;
        gap: 3px;
        height: 10px;
        padding-left: 8px;
        background: #2b2b2b;
    }

    .dom-tabs button {
        height: 8px;
        padding: 0 1px;
        border: 1px solid transparent;
        line-height: 6px;
    }

    .dom-tabs .active {
        color: #3aa5e8;
        border-color: #1f7db8;
    }

    .cursor {
        position: absolute;
        right: 194px;
        top: 49px;
        width: 5px;
    }

    .camera {
        left: 0;
        top: 277px;
        width: 270px;
        height: 156px;
        padding-right: 9px;
        box-sizing: border-box;
        background: #000;
        color: #e2e2e2;
        display: flex;
        flex-direction: column;
        align-items: center;
    }

    .brand {
        display: flex;
        align-items: center;
        gap: 4px;
        height: 20px;
        margin-top: 18px;
        color: #fff;
        font-family: Roboto, 'Liberation Sans', sans-serif;
        font-size: 17px;
        line-height: 20px;
    }

    .brand svg {
        width: 18px;
        fill: none;
        stroke: #fff;
        stroke-width: 2;
    }

    .device {
        width: 66px;
        margin: 19px 0 17px;
    }

    .camera p {
        margin: 0;
        font-family: Inter, sans-serif;
        font-size: 6px;
        line-height: 12px;
    }

    .camera .mirror {
        transform: scaleX(-1);
    }

    .taskbar {
        position: absolute;
        inset: auto 0 0;
        height: 13px;
        display: flex;
        align-items: center;
        background: linear-gradient(90deg, #2c201e 0%, #2c201e 30%, #202224 45%, #1b1c1c 75%, #221d1a);
    }

    .apps {
        display: flex;
        align-items: center;
        justify-content: space-between;
        width: 236px;
        margin-left: 403px;
    }

    .apps button {
        width: 8px;
        height: 8px;
    }

    .search {
        display: flex;
        align-items: center;
        gap: 4px;
        width: 66px;
        height: 9px;
        padding-left: 4px;
        margin-left: -2px;
        box-sizing: border-box;
        border-radius: 5px;
        background: #3c3a39;
    }

    .search svg {
        width: 5px;
    }

    .search input {
        width: 40px;
        font-size: 5px;
    }

    .search input::placeholder {
        color: #ddd;
    }

    .current {
        box-shadow: 0 0 0 2px #333638;
    }

    .tray {
        display: flex;
        align-items: center;
        gap: 3px;
        margin-left: auto;
        padding-right: 5px;
    }

    .tray svg {
        width: 18px;
    }

    .tray .chevron {
        width: 6px;
    }

    .stack {
        line-height: 5px;
        text-align: right;
        color: #fff;
    }
</style>
